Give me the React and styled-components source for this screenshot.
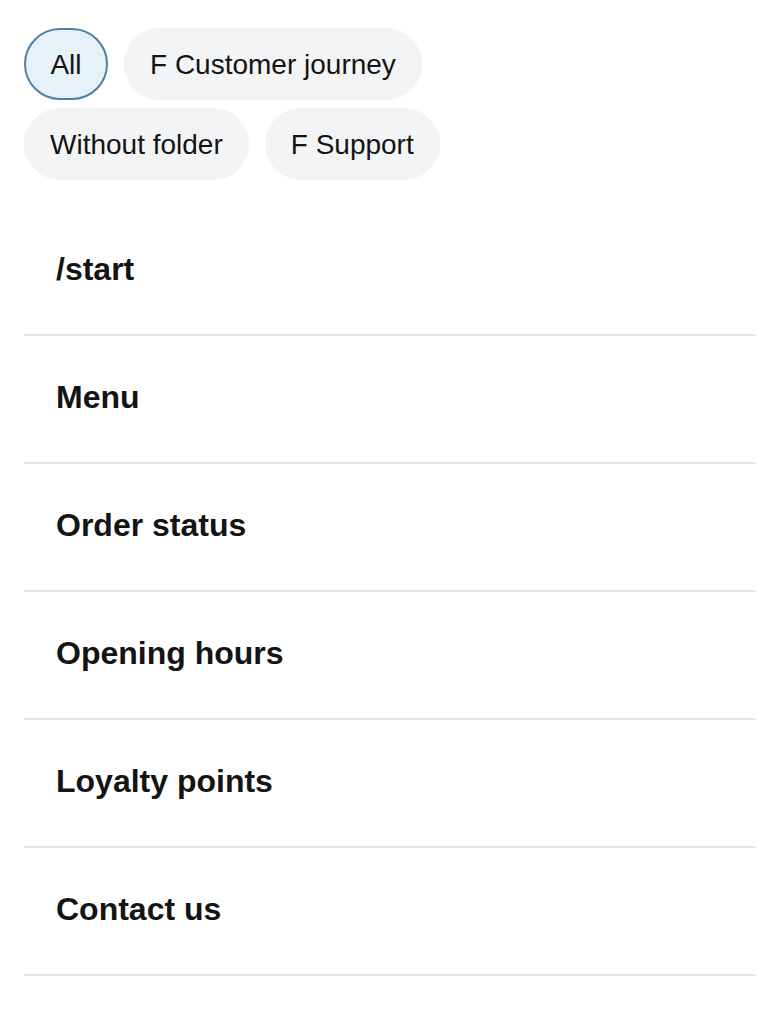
import React, { useState } from "react";
import styled, { createGlobalStyle } from "styled-components";

const GlobalStyle = createGlobalStyle`
  body {
    margin: 0;
    background: #ffffff;
    font-family: "Liberation Sans", Arial, sans-serif;
    color: #141414;
  }
`;

const folders = ["All", "F Customer journey", "Without folder", "F Support"];

const flows = [
  "/start",
  "Menu",
  "Order status",
  "Opening hours",
  "Loyalty points",
  "Contact us",
];

const App = () => {
  const [active, setActive] = useState("All");

  return (
    <Page>
      <GlobalStyle />
      <ChipRow>
        {folders.map((name) => (
          <Chip
            key={name}
            $active={active === name}
            onClick={() => setActive(name)}
          >
            {name}
          </Chip>
        ))}
      </ChipRow>
      <FlowList>
        {flows.map((title) => (
          <FlowItem key={title}>
            <FlowTitle>{title}</FlowTitle>
          </FlowItem>
        ))}
      </FlowList>
    </Page>
  );
};

const Page = styled.div`
  padding: 28px 24px 0;
`;

const ChipRow = styled.div`
  display: flex;
  flex-wrap: wrap;
  gap: 8px 16px;
  max-width: 560px;
`;

const Chip = styled.button`
  height: 72px;
  min-width: 84px;
  padding: 2px 24px 0;
  border-radius: 36px;
  border: 2px solid ${(p) => (p.$active ? "#52809f" : "transparent")};
  background: ${(p) => (p.$active ? "#e7f1f8" : "#f3f4f6")};
  font-family: "Liberation Sans", Arial, sans-serif;
  font-size: 28px;
  color: #141414;
  cursor: pointer;
`;

const FlowList = styled.ul`
  list-style: none;
  margin: 28px 0 0;
  padding: 0;
`;

const FlowItem = styled.li`
  height: 126px;
  display: flex;
  align-items: center;
  padding: 0 32px;
  border-bottom: 2px solid #e2e6ea;
`;

const FlowTitle = styled.span`
  font-size: 32px;
  font-weight: 700;
  color: #141414;
  margin-top: -4px;
`;

export default App;
